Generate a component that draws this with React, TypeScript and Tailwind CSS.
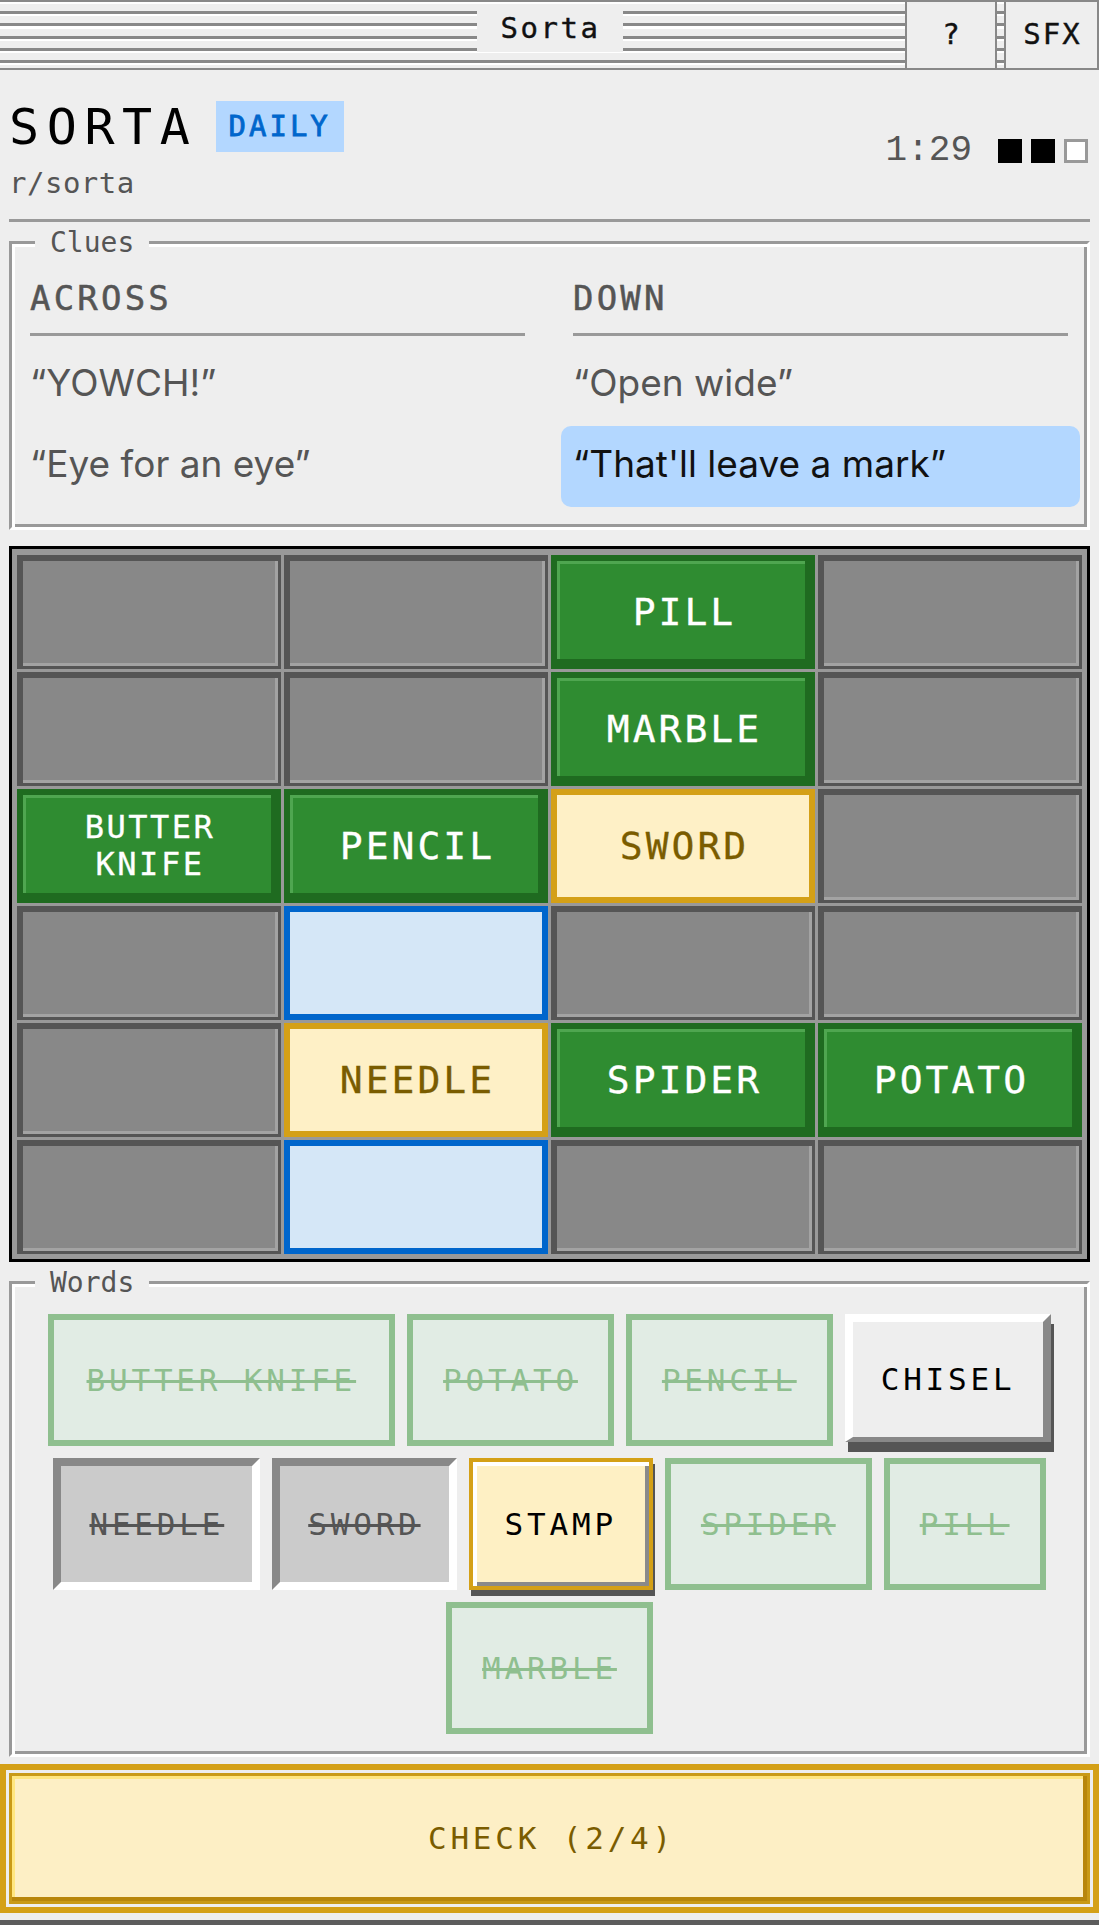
type TileKind = 'empty' | 'green' | 'gold' | 'blue';
type Tile = { kind: TileKind; label?: string };

type WordState = 'found' | 'used' | 'selected' | 'idle';
type Word = { label: string; state: WordState };

const E: Tile = { kind: 'empty' };
const B: Tile = { kind: 'blue' };
const g = (label: string): Tile => ({ kind: 'green', label });
const y = (label: string): Tile => ({ kind: 'gold', label });

const board: Tile[][] = [
  [E, E, g('PILL'), E],
  [E, E, g('MARBLE'), E],
  [g('BUTTER KNIFE'), g('PENCIL'), y('SWORD'), E],
  [E, B, E, E],
  [E, y('NEEDLE'), g('SPIDER'), g('POTATO')],
  [E, B, E, E],
];

const words: Word[] = [
  { label: 'BUTTER KNIFE', state: 'found' },
  { label: 'POTATO', state: 'found' },
  { label: 'PENCIL', state: 'found' },
  { label: 'CHISEL', state: 'idle' },
  { label: 'NEEDLE', state: 'used' },
  { label: 'SWORD', state: 'used' },
  { label: 'STAMP', state: 'selected' },
  { label: 'SPIDER', state: 'found' },
  { label: 'PILL', state: 'found' },
  { label: 'MARBLE', state: 'found' },
];

const tileClass: Record<TileKind, string> = {
  empty:
    'border-t-[6px] border-l-[6px] border-r-[3px] border-b-[3px] border-[#555] bg-[#888] shadow-[inset_-3px_-3px_0_#a3a3a3]',
  green:
    'border-[6px] border-[#1f6b20] bg-[#2f8c31] text-white shadow-[inset_-4px_-4px_0_#1f6b20,inset_3px_3px_0_#4fa650]',
  gold: 'border-[6px] border-[#d4a017] bg-[#fef0c6] text-[#7a5c00]',
  blue: 'border-[6px] border-[#0066cc] bg-[#d5e7f7]',
};

const chipClass: Record<WordState, string> = {
  found:
    'h-[132px] px-[30px] border-[6px] border-[#8fbf8f] bg-[#e1ece4] text-[#8fbf8f] line-through decoration-[3px]',
  used:
    'h-[132px] px-[28px] border-[8px] border-t-[#888] border-l-[#888] border-r-white border-b-white bg-[#cbcbcb] text-[#555] line-through decoration-[3px]',
  selected:
    'h-[132px] px-[32px] border-[4px] border-[#d4a017] bg-[#fef0c4] text-black shadow-[inset_4px_4px_0_#fff,inset_-4px_-4px_0_#8a8a8a,2px_6px_0_#555]',
  idle:
    'h-[128px] px-[28px] border-[8px] border-b-[5px] border-t-white border-l-white border-r-[#888] border-b-[#888] bg-[#eee] text-black shadow-[3px_10px_0_#555]',
};

function TitleBar() {
  return (
    <div className="grid h-[70px] grid-cols-[1fr_146px_1fr] border-y-2 border-[#888] bg-[repeating-linear-gradient(to_bottom,#fff_0px,#fff_2px,#eee_2px,#eee_9.25px,#888_9.25px,#888_12.25px)]">
      <div />
      <div className="mt-[4px] flex h-[46px] items-center justify-center bg-[#eee] pl-[2px] text-[29px] tracking-[2.5px] text-[#111] [-webkit-text-stroke:0.4px_#111]">
        Sorta
      </div>
      <div className="flex justify-end gap-[7px]">
        <button className="flex w-[92px] items-center justify-center border-x-2 border-[#888] bg-[#eee] text-[29px] text-[#111] [-webkit-text-stroke:0.4px_#111]">
          ?
        </button>
        <button className="flex w-[95px] items-center justify-center border-x-2 border-[#888] bg-[#eee] pl-[2px] text-[29px] tracking-[2px] text-[#111] [-webkit-text-stroke:0.4px_#111]">
          SFX
        </button>
      </div>
    </div>
  );
}

function Header() {
  return (
    <header className="flex items-center justify-between pt-[31px] pb-[19px]">
      <div>
        <div className="flex h-[51px] items-center">
          <h1 className="text-[50px] leading-[50px] tracking-[7.6px] text-black">SORTA</h1>
          <span className="ml-[18px] flex h-[51px] items-center bg-[#b3d7ff] px-[13px] text-[29px] tracking-[3px] text-[#0066cc] [-webkit-text-stroke:0.8px_#0066cc]">
            DAILY
          </span>
        </div>
        <div className="mt-[14px] text-[29px] leading-[34px] tracking-[0.5px] text-[#555]">r/sorta</div>
      </div>
      <div className="mr-[2px] flex items-center">
        <span className="font-['Liberation_Mono',monospace] text-[36px] leading-none text-[#555]">1:29</span>
        <div className="ml-[26px] flex gap-[9px]">
          <span className="h-[24px] w-[24px] bg-black" />
          <span className="h-[24px] w-[24px] bg-black" />
          <span className="h-[24px] w-[24px] border-[3px] border-[#999] bg-white" />
        </div>
      </div>
    </header>
  );
}

function Legend({ text }: { text: string }) {
  return (
    <span className="absolute -top-[16px] left-[23px] bg-[#eee] px-[15px] text-[28px] leading-[30px] text-[#555]">
      {text}
    </span>
  );
}

const groove =
  'relative border-[3px] border-t-[#999] border-l-[#999] border-r-white border-b-white shadow-[inset_3px_3px_0_#fff,inset_-3px_-3px_0_#999]';

function ClueColumn({ title, clues, active }: { title: string; clues: string[]; active?: number }) {
  return (
    <div>
      <div className="border-b-[3px] border-[#999] pb-[15px] text-[34px] leading-[40px] tracking-[3.2px] text-[#555] [-webkit-text-stroke:0.5px_#555]">
        {title}
      </div>
      <div className="mt-[9px]">
        {clues.map((c, i) => (
          <div
            key={c}
            className={`-mx-[12px] h-[81px] rounded-[10px] px-[12px] pt-[16px] font-['Inter',sans-serif] text-[37px] leading-[44px] ${
              i === active ? 'bg-[#b3d7ff] text-[#111]' : 'text-[#555]'
            }`}
          >
            {c}
          </div>
        ))}
      </div>
    </div>
  );
}

function Clues() {
  return (
    <div className={`${groove} mt-[19px] pt-[34px] pr-[19px] pb-[20px] pl-[18px]`}>
      <Legend text="Clues" />
      <div className="grid grid-cols-2 gap-x-[48px]">
        <ClueColumn title="ACROSS" clues={['\u201CYOWCH!\u201D', '\u201CEye for an eye\u201D']} />
        <ClueColumn title="DOWN" clues={['\u201COpen wide\u201D', "\u201CThat'll leave a mark\u201D"]} active={1} />
      </div>
    </div>
  );
}

function Board() {
  return (
    <div className="mt-[16px] grid auto-rows-[114px] grid-cols-4 gap-[3px] border-[3px] border-black bg-[#999] px-[5px] pt-[6px] pb-[5px]">
      {board.flat().map((t, i) => {
        const two = t.label?.includes(' ');
        return (
          <div key={i} className={`flex items-center justify-center text-center ${tileClass[t.kind]}`}>
            {t.label && (
              <span
                className={
                  two
                    ? 'w-[150px] pl-[2px] text-[32px] leading-[37px] tracking-[2.5px] [-webkit-text-stroke:0.3px_currentColor]'
                    : 'pl-[3px] text-[38px] leading-none tracking-[3px] [-webkit-text-stroke:0.3px_currentColor]'
                }
              >
                {t.label}
              </span>
            )}
          </div>
        );
      })}
    </div>
  );
}

function Words() {
  return (
    <div className={`${groove} mt-[19px] px-[12px] pt-[30px] pb-[20px]`}>
      <Legend text="Words" />
      <div className="flex flex-wrap justify-center gap-[12px]">
        {words.map((w) => (
          <button
            key={w.label}
            className={`flex items-center justify-center text-[31px] leading-none tracking-[3.8px] whitespace-nowrap ${chipClass[w.state]} ${
              w.label.includes(' ') ? 'px-[33px]' : ''
            }`}
          >
            {w.label}
          </button>
        ))}
      </div>
    </div>
  );
}

export default function App() {
  return (
    <div className="flex min-h-screen flex-col bg-[#eee] font-['DejaVu_Sans_Mono',monospace] text-[#111]">
      <TitleBar />
      <div className="px-[9px]">
        <Header />
        <div className="h-[3px] bg-[#999]" />
        <Clues />
        <Board />
        <Words />
      </div>
      <div className="mt-[7px] border-[6px] border-[#d4a017] bg-[#eee] p-[3px]">
        <button className="flex h-[131px] w-full items-center justify-center border-[3px] border-[#c99a17] bg-[#fdefc5] pl-[4px] text-[31px] tracking-[3.8px] text-[#7a5c00] shadow-[inset_-4px_-4px_0_#b8860b,inset_3px_3px_0_#ffe680]">
          CHECK (2/4)
        </button>
      </div>
      <div className="mt-auto h-[5px] bg-[#5c5c5c]" />
    </div>
  );
}
